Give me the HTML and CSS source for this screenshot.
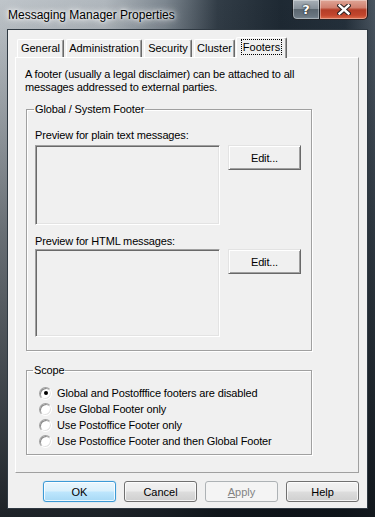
FILE: index.html
```html
<!DOCTYPE html>
<html>
<head>
<meta charset="utf-8">
<title>Messaging Manager Properties</title>
<link rel="stylesheet" href="styles.css">
</head>
<body>
<div class="window">
  <div class="titlebar">
    <span class="title">Messaging Manager Properties</span>
    <div class="caption-buttons">
      <div class="cap help">?</div>
      <div class="cap close">
        <svg width="14" height="11" viewBox="0 0 14 11">
          <path d="M2.5 1.5 L11.5 9.5 M11.5 1.5 L2.5 9.5" stroke="#2a2020" stroke-width="4.4" stroke-linecap="square" fill="none"/>
          <path d="M2.5 1.5 L11.5 9.5 M11.5 1.5 L2.5 9.5" stroke="#ffffff" stroke-width="2.4" stroke-linecap="square" fill="none"/>
        </svg>
      </div>
    </div>
  </div>
  <div class="frame">
    <div class="client">
      <div class="tabs">
        <div class="tab t-general">General</div>
        <div class="tab t-admin">Administration</div>
        <div class="tab t-security">Security</div>
        <div class="tab t-cluster">Cluster</div>
        <div class="tab t-footers active"><span class="focus">Footers</span></div>
      </div>
      <div class="panel">
        <p class="desc">A footer (usually a legal disclaimer) can be attached to all<br>messages addressed to external parties.</p>
        <fieldset class="group global">
          <legend>Global / System Footer</legend>
          <div class="label first">Preview for plain text messages:</div>
          <div class="preview-row">
            <div class="preview plain"></div>
            <button class="edit">Edit...</button>
          </div>
          <div class="label second">Preview for HTML messages:</div>
          <div class="preview-row row2">
            <div class="preview html"></div>
            <button class="edit">Edit...</button>
          </div>
        </fieldset>
        <fieldset class="group scope">
          <legend>Scope</legend>
          <div class="radio"><span class="circle checked"></span>Global and Postofffice footers are disabled</div>
          <div class="radio"><span class="circle"></span>Use Global Footer only</div>
          <div class="radio"><span class="circle"></span>Use Postoffice Footer only</div>
          <div class="radio"><span class="circle"></span>Use Postoffice Footer and then Global Footer</div>
        </fieldset>
      </div>
      <div class="buttons">
        <button class="btn default">OK</button>
        <button class="btn">Cancel</button>
        <button class="btn disabled"><u>A</u>pply</button>
        <button class="btn">Help</button>
      </div>
    </div>
  </div>
</div>
</body>
</html>
```

FILE: styles.css
```css
* { box-sizing: border-box; }

html, body {
  margin: 0;
  padding: 0;
  background: #1b232a;
}

body {
  font-family: "Liberation Sans", Arial, sans-serif;
  font-size: 11px;
  color: #000;
}

.window {
  width: 375px;
  height: 517px;
  display: flex;
  flex-direction: column;
  overflow: hidden;
  background:
    linear-gradient(to bottom, rgba(18, 25, 32, 0) 0%, rgba(18, 25, 32, 0.5) 45%, rgba(12, 17, 22, 0.9) 100%),
    linear-gradient(to right, #bfc5ca 0%, #b0b7bd 28%, #7d8790 44%, #323d47 58%, #1e2933 75%, #24303b 92%, #4a5560 100%);
}

/* ---------- title bar ---------- */
.titlebar {
  height: 29px;
  display: flex;
  align-items: flex-start;
  flex: none;
}

.title {
  flex: 1;
  margin-top: 8px;
  padding-left: 8px;
  font-size: 12px;
  line-height: 14px;
  color: #000;
  text-shadow: 0 0 6px #ffffff, 0 0 3px #ffffff, 0 0 10px rgba(255, 255, 255, 0.8);
}

.caption-buttons {
  display: flex;
  margin-right: 7px;
}

.cap {
  height: 20px;
  display: flex;
  align-items: center;
  justify-content: center;
  border: 1px solid rgba(10, 14, 18, 0.85);
  border-top: none;
  box-shadow: inset 0 0 0 1px rgba(255, 255, 255, 0.35);
}

.cap.help {
  width: 28px;
  border-radius: 0 0 0 5px;
  background: linear-gradient(to bottom, #a9b1b8 0%, #87919a 45%, #5c6770 50%, #6a7680 85%, #7d8a94 100%);
  color: #fff;
  font-family: "DejaVu Sans", sans-serif;
  font-weight: bold;
  font-size: 13px;
  text-shadow: 0 0 2px #222, 0 0 1px #000;
}

.cap.close {
  width: 48px;
  border-left: none;
  border-radius: 0 0 5px 0;
  background: linear-gradient(to bottom, #dfa596 0%, #d0806f 40%, #b43d27 52%, #c2462d 80%, #dd6d4c 100%);
}

/* ---------- frame / client ---------- */
.frame {
  flex: 1;
  display: flex;
  padding: 0 7px 8px 7px;
}

.client {
  flex: 1;
  display: flex;
  flex-direction: column;
  background: #f0f0f0;
  border: 1px solid #2f3942;
  padding: 0 8px 0 7px;
}

/* ---------- tabs ---------- */
.tabs {
  display: flex;
  align-items: flex-end;
  height: 21px;
  margin-top: 7px;
  margin-bottom: -1px;
  padding-left: 2px;
  position: relative;
  z-index: 1;
}

.tab {
  height: 18px;
  margin-bottom: 1px;
  margin-right: 2px;
  display: flex;
  align-items: center;
  justify-content: center;
  background: #f0f0f0;
  border-top: 1px solid #ffffff;
  border-left: 1px solid #ffffff;
  border-right: 1px solid #696969;
  box-shadow: inset -1px 0 0 #a0a0a0;
  border-radius: 2px 2px 0 0;
  padding-bottom: 1px;
  white-space: nowrap;
}

.t-general { width: 47px; }
.t-admin { width: 76px; }
.t-security { width: 48px; }
.t-cluster { width: 41px; margin-right: 1px; }

.tab.active {
  width: 51px;
  height: 21px;
  margin-bottom: 0;
  margin-right: 0;
  padding-bottom: 3px;
}

.focus {
  outline: 1px dotted #000;
  outline-offset: 0;
  padding: 1px 1px 0 1px;
  line-height: 13px;
}

/* ---------- panel ---------- */
.panel {
  flex: 1;
  background: #f0f0f0;
  border-top: 1px solid #ffffff;
  border-left: 1px solid #ffffff;
  border-right: 1px solid #a0a0a0;
  border-bottom: 1px solid #a0a0a0;
  padding: 10px 0 0 9px;
}

.desc {
  margin: 0;
  line-height: 13px;
  letter-spacing: -0.15px;
}

.group {
  margin: 9px 0 0 1px;
  width: 286px;
  border: 1px solid #a0a0a0;
  box-shadow: 1px 1px 0 #ffffff, inset 1px 1px 0 #ffffff;
  padding: 0 0 0 8px;
  min-width: 0;
}

.group legend {
  margin-left: -2px;
  padding: 0 1px;
  line-height: 13px;
  letter-spacing: -0.15px;
}

.global legend {
  margin-left: -1px;
}

.global {
  padding-top: 13px;
  padding-bottom: 13px;
}

.label {
  line-height: 13px;
  letter-spacing: -0.15px;
}

.label.second {
  margin-top: 10px;
}

.preview-row {
  display: flex;
  align-items: flex-start;
  gap: 8px;
  margin-top: 3px;
}

.preview-row.row2 {
  margin-top: 1px;
}

.preview {
  width: 185px;
  background: #f0f0f0;
  border-top: 1px solid #a0a0a0;
  border-left: 1px solid #a0a0a0;
  border-right: 1px solid #ffffff;
  border-bottom: 1px solid #ffffff;
  box-shadow: inset 1px 1px 0 #696969, inset -1px -1px 0 #e3e3e3;
}

.preview.plain { height: 80px; }
.preview.html { height: 88px; }

.edit {
  width: 73px;
  height: 25px;
  margin: 0;
  padding: 0;
  font: inherit;
  letter-spacing: -0.15px;
  color: #000;
  background: #f0f0f0;
  border-style: solid;
  border-width: 1px;
  border-color: #e3e3e3 #696969 #696969 #e3e3e3;
  box-shadow: inset 1px 1px 0 #ffffff, inset -1px -1px 0 #a0a0a0;
  border-radius: 0;
}

.scope {
  margin-top: 13px;
  padding-top: 8px;
  padding-bottom: 5px;
}

.radio {
  display: flex;
  align-items: center;
  height: 16px;
  letter-spacing: -0.15px;
  white-space: nowrap;
}

.circle {
  width: 13px;
  height: 13px;
  margin-left: 4px;
  margin-right: 5px;
  border-radius: 50%;
  flex: none;
  background: #ffffff;
  border: 1px solid;
  border-color: #a0a0a0 #ffffff #ffffff #a0a0a0;
  box-shadow: inset 1px 1px 0 #8a8a8a, inset -1px -1px 0 #e3e3e3;
  display: flex;
  align-items: center;
  justify-content: center;
}

.circle.checked::after {
  content: "";
  width: 4px;
  height: 4px;
  border-radius: 50%;
  background: #000;
}

/* ---------- bottom buttons ---------- */
.buttons {
  display: flex;
  justify-content: flex-end;
  gap: 8px;
  margin-top: 8px;
  margin-bottom: 6px;
  height: 21px;
  flex: none;
}

.btn {
  width: 73px;
  height: 21px;
  margin: 0;
  padding: 0;
  font: inherit;
  color: #000;
  border: 1px solid #707070;
  border-radius: 3px;
  background: linear-gradient(to bottom, #f2f2f2 0%, #ebebeb 48%, #dddddd 52%, #cfcfcf 100%);
  box-shadow: inset 0 0 0 1px rgba(255, 255, 255, 0.75);
}

.btn.default {
  border-color: #3c9ad6;
  background: linear-gradient(to bottom, #eaf6fd 0%, #d9f0fc 48%, #bee6fd 52%, #a7d9f5 100%);
  box-shadow: inset 0 0 0 1px rgba(255, 255, 255, 0.8), 0 0 1px #58b7ef;
}

.btn.disabled {
  color: #838383;
  border-color: #adb2b5;
  background: #f4f4f4;
  box-shadow: none;
}

.btn u {
  text-decoration: underline;
}
```
